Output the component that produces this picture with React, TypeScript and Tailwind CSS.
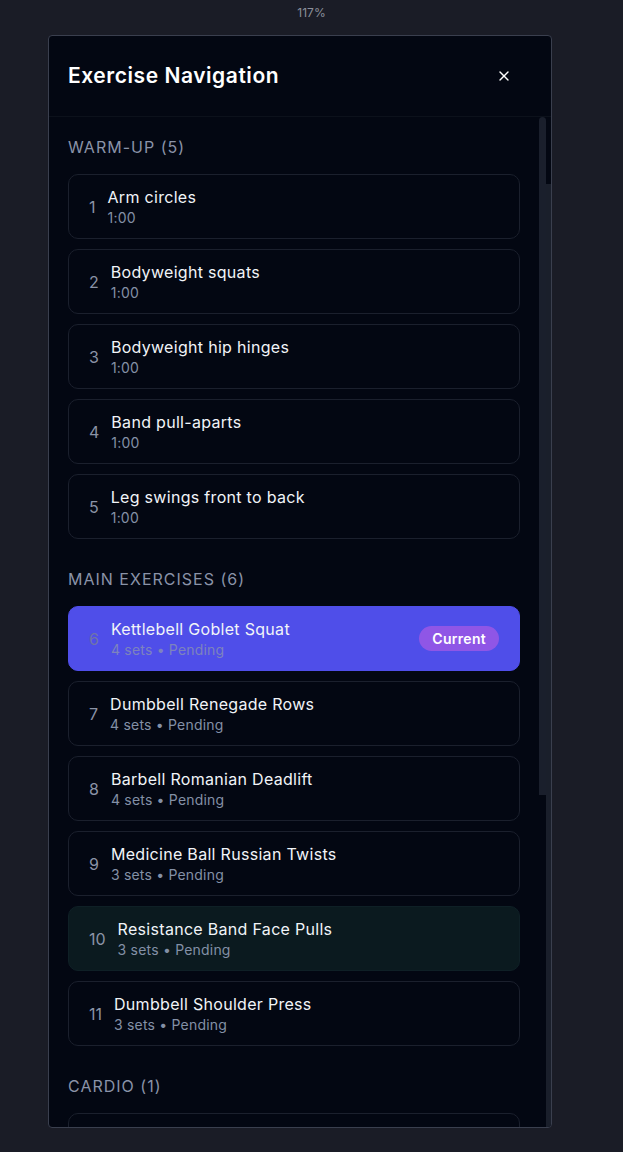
import { X } from "lucide-react";

type Item = { title: string; sub: string };

const sections: { name: string; items: Item[] }[] = [
  {
    name: "Warm-up",
    items: [
      { title: "Arm circles", sub: "1:00" },
      { title: "Bodyweight squats", sub: "1:00" },
      { title: "Bodyweight hip hinges", sub: "1:00" },
      { title: "Band pull-aparts", sub: "1:00" },
      { title: "Leg swings front to back", sub: "1:00" },
    ],
  },
  {
    name: "Main Exercises",
    items: [
      { title: "Kettlebell Goblet Squat", sub: "4 sets • Pending" },
      { title: "Dumbbell Renegade Rows", sub: "4 sets • Pending" },
      { title: "Barbell Romanian Deadlift", sub: "4 sets • Pending" },
      { title: "Medicine Ball Russian Twists", sub: "3 sets • Pending" },
      { title: "Resistance Band Face Pulls", sub: "3 sets • Pending" },
      { title: "Dumbbell Shoulder Press", sub: "3 sets • Pending" },
    ],
  },
  {
    name: "Cardio",
    items: [{ title: "Jump rope intervals", sub: "10:00" }],
  },
];

const CURRENT = 6;
const HOVER = 10;

function ExerciseCard({ n, item }: { n: number; item: Item }) {
  const current = n === CURRENT;
  const hover = n === HOVER;
  const box = current
    ? "bg-[#4f4ee9] border-[#4f4ee9]"
    : hover
    ? "bg-[#0b1a1f] border-[#0f2026]"
    : "bg-[#030712] border-[#1b202d]";

  return (
    <div className={`h-[65px] shrink-0 flex items-center gap-3 px-5 rounded-[10px] border ${box}`}>
      <span className={`text-base ${current ? "text-[#6f74a8]" : "text-[#8b93a6]"}`}>{n}</span>
      <div className="flex-1 flex flex-col">
        <span className="text-base leading-[22px] font-normal tracking-[0.3px] text-[#f1f4f8]">{item.title}</span>
        <span className={`text-sm leading-5 tracking-[0.2px] ${current ? "text-[#7d83bd]" : "text-[#8390a6]"}`}>
          {item.sub}
        </span>
      </div>
      {current && (
        <span className="rounded-full bg-[#8f56e6] px-[13px] h-[25px] flex items-center text-sm font-semibold tracking-[0.3px] text-white">
          Current
        </span>
      )}
    </div>
  );
}

export default function App() {
  let n = 0;
  return (
    <div className="min-h-screen bg-[#1a1c26] font-['Inter',sans-serif] pt-[5px] pb-6">
      <div className="text-center text-xs leading-4 text-[#8b909b]">117%</div>

      {/* Dialog */}
      <div className="ml-[48px] mt-[14px] w-[504px] h-[1093px] flex flex-col rounded-[4px] border border-[#3a3f4e] bg-[#030712] overflow-hidden">
        <div className="h-[81px] shrink-0 flex items-center justify-between pl-[19px] pr-[39px] border-b border-[#0c111b]">
          <h2 className="text-[21px] font-semibold text-white tracking-[0.55px]">Exercise Navigation</h2>
          <X className="w-[16px] h-[16px] text-white" strokeWidth={2} />
        </div>

        <div className="flex-1 min-h-0 flex">
          {/* List */}
          <div className="flex-1 overflow-hidden pl-[19px] pr-[19px] pt-[18px]">
            {sections.map((s, si) => (
              <div key={s.name} className={si > 0 ? "mt-7" : ""}>
                <h3 className="text-base leading-6 uppercase tracking-[1px] text-[#8a93a8] mb-[15px]">
                  {s.name} ({s.items.length})
                </h3>
                <div className="flex flex-col gap-[10px]">
                  {s.items.map((it) => {
                    n += 1;
                    return <ExerciseCard key={n} n={n} item={it} />;
                  })}
                </div>
              </div>
            ))}
          </div>

          {/* Scrollbar */}
          <div className="w-[7px] flex flex-col">
            <div className="h-[678px] rounded-t-full bg-[#1a1f2c]" />
          </div>
          <div className="w-[5px] flex flex-col">
            <div className="h-[67px]" />
            <div className="flex-1 bg-[#1a1f2b]" />
          </div>
        </div>
      </div>
    </div>
  );
}
